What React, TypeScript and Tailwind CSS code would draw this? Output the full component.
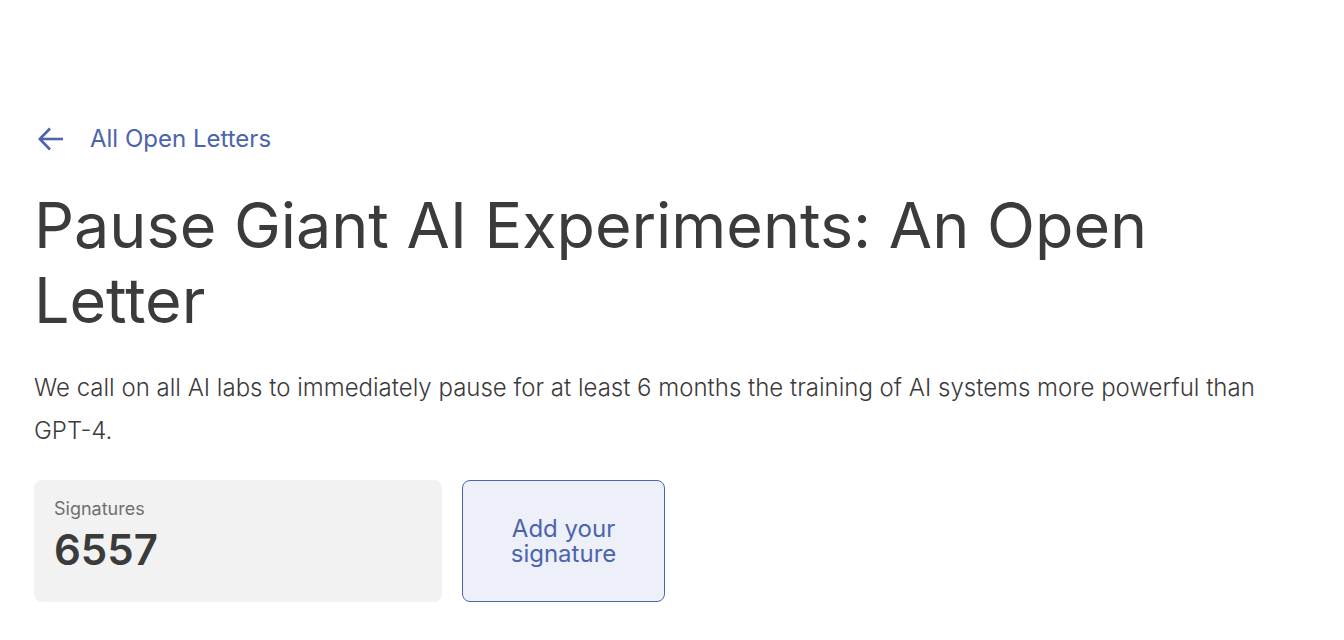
export default function App() {
  return (
    <main
      className="min-h-screen bg-white px-[34px] pt-[125px] text-[#3b3b3b]"
      style={{ fontFamily: "Inter, 'Noto Sans', sans-serif" }}
    >
      <a href="#" className="flex h-[28px] items-center text-[24px] font-normal text-[#4b64ad]">
        <svg width="26" height="24" viewBox="0 0 26 24" fill="none" className="ml-[4px]">
          <polyline points="12,1.5 1.8,12 12,22.5" stroke="#4b64ad" strokeWidth="2.6" />
          <line x1="2" y1="12" x2="25" y2="12" stroke="#4b64ad" strokeWidth="2.6" />
        </svg>
        <span className="ml-[26px]">All Open Letters</span>
      </a>

      <h1 className="mt-[35px] max-w-[1240px] text-[62.8px] leading-[75px] font-normal text-[#3b3b3b]">
        Pause Giant AI Experiments: An Open Letter
      </h1>

      <p className="mt-[28px] max-w-[1276px] text-[24px] leading-[43px] font-light text-[#3b3b3b]">
        We call on all AI labs to immediately pause for at least 6 months the training of AI systems
        more powerful than GPT-4.
      </p>

      <div className="mt-[28px] flex gap-[20px]">
        <div className="flex h-[122px] w-[408px] flex-col rounded-[8px] bg-[#f2f2f2] px-[20px] pt-[18px]">
          <span className="text-[18px] leading-[22px] text-[#6f6f6f]">Signatures</span>
          <span className="mt-[5px] text-[42px] leading-[50px] font-semibold text-[#3b3b3b]">6557</span>
        </div>
        <button className="flex h-[122px] w-[203px] items-center justify-center rounded-[8px] border border-[#4b64ad] bg-[#edf0f8] text-[24px] leading-[25px] text-[#4b64ad]">
          Add your
          <br />
          signature
        </button>
      </div>
    </main>
  );
}
